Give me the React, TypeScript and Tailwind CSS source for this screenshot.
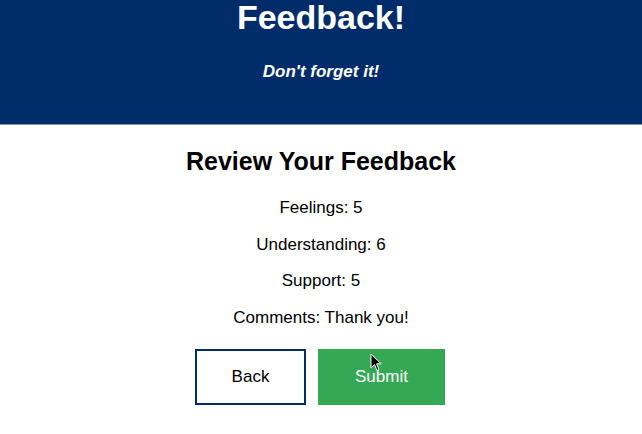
export default function App() {
  const items = ['Feelings: 5', 'Understanding: 6', 'Support: 5', 'Comments: Thank you!']
  return (
    <div className="min-h-[434px] w-full bg-white text-black font-['Liberation_Sans',Arial,sans-serif]">
      {/* Header */}
      <header className="h-[125px] bg-[#002c69] border-b border-[#8592a8] flex flex-col items-center text-white">
        <h1 className="mt-0 text-[34px] leading-[34px] font-bold">Feedback!</h1>
        <p className="mt-[28px] text-[17px] leading-[20px] font-bold italic">Don't forget it!</p>
      </header>

      <main className="flex flex-col items-center">
        <h2 className="mt-[19px] text-[25px] leading-[34px] font-bold">Review Your Feedback</h2>
        <div className="mt-[20px] flex flex-col items-center gap-[16.5px]">
          {items.map(t => (
            <p key={t} className="text-[17px] leading-[20px]">{t}</p>
          ))}
        </div>

        <div className="mt-[21px] pr-[2px] flex gap-[12px]">
          <button className="w-[111px] h-[56px] border-2 border-[#002c69] bg-white text-[17px]">Back</button>
          <div className="relative">
            <button className="w-[127px] h-[56px] bg-[#34a853] text-white text-[17px]">Submit</button>
            {/* mouse cursor */}
            <svg className="absolute left-[52px] top-[4px]" width="12" height="19" viewBox="0 0 12 19">
              <path d="M1 1 L1 15 L4.5 11.5 L7 17.5 L9 16.6 L6.6 10.8 L11.2 10.8 Z" fill="#000" stroke="#fff" strokeWidth="1" strokeLinejoin="round" />
            </svg>
          </div>
        </div>
      </main>
    </div>
  )
}
